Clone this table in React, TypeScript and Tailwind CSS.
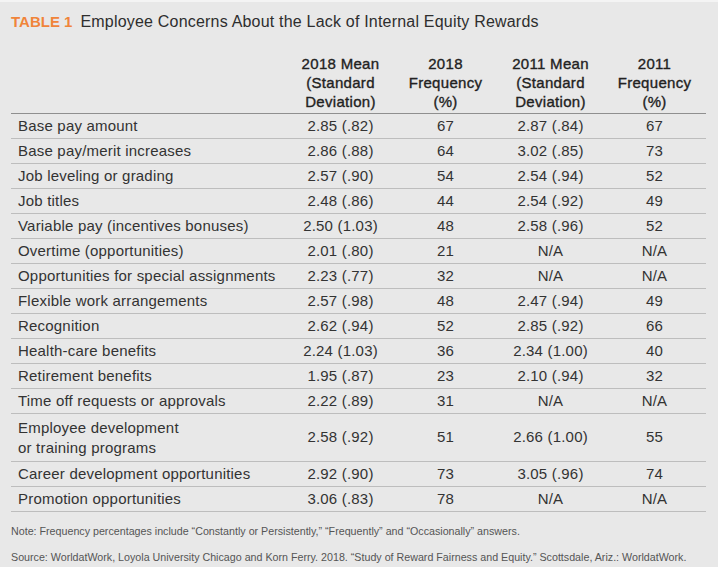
const rows: [string, string, string, string, string][] = [
  ["Base pay amount", "2.85 (.82)", "67", "2.87 (.84)", "67"],
  ["Base pay/merit increases", "2.86 (.88)", "64", "3.02 (.85)", "73"],
  ["Job leveling or grading", "2.57 (.90)", "54", "2.54 (.94)", "52"],
  ["Job titles", "2.48 (.86)", "44", "2.54 (.92)", "49"],
  ["Variable pay (incentives bonuses)", "2.50 (1.03)", "48", "2.58 (.96)", "52"],
  ["Overtime (opportunities)", "2.01 (.80)", "21", "N/A", "N/A"],
  ["Opportunities for special assignments", "2.23 (.77)", "32", "N/A", "N/A"],
  ["Flexible work arrangements", "2.57 (.98)", "48", "2.47 (.94)", "49"],
  ["Recognition", "2.62 (.94)", "52", "2.85 (.92)", "66"],
  ["Health-care benefits", "2.24 (1.03)", "36", "2.34 (1.00)", "40"],
  ["Retirement benefits", "1.95 (.87)", "23", "2.10 (.94)", "32"],
  ["Time off requests or approvals", "2.22 (.89)", "31", "N/A", "N/A"],
  ["Employee development\nor training programs", "2.58 (.92)", "51", "2.66 (1.00)", "55"],
  ["Career development opportunities", "2.92 (.90)", "73", "3.05 (.96)", "74"],
  ["Promotion opportunities", "3.06 (.83)", "78", "N/A", "N/A"],
];

const headers = [
  ["2018 Mean", "(Standard", "Deviation)"],
  ["2018", "Frequency", "(%)"],
  ["2011 Mean", "(Standard", "Deviation)"],
  ["2011", "Frequency", "(%)"],
];

export default function App() {
  return (
    <div
      className="w-[718px] h-[567px] bg-[#e8e8e8] border-t-2 border-[#f4f4f4] text-[#333] overflow-hidden"
      style={{ fontFamily: '"Liberation Sans", Arial, sans-serif' }}
    >
      <div className="pl-[11px] pt-[10px] leading-[20px] text-[#2e2e2e]">
        <span className="font-bold text-[15px] text-[#f0843a]">TABLE 1</span>
        <span className="ml-[8px] text-[16px] tracking-[0.2px]">
          Employee Concerns About the Lack of Internal Equity Rewards
        </span>
      </div>

      <table className="ml-[11px] mt-[22px] w-[695px] border-collapse table-fixed">
        <colgroup>
          <col className="w-[277px]" />
          <col className="w-[105px]" />
          <col className="w-[105px]" />
          <col className="w-[105px]" />
          <col className="w-[103px]" />
        </colgroup>
        <thead>
          <tr className="border-b border-[#8f8f8f]">
            <th />
            {headers.map((h, i) => (
              <th
                key={i}
                className="pb-[2px] text-center align-bottom text-[15px] leading-[19px] tracking-[0.3px] font-normal text-[#222] [-webkit-text-stroke:0.35px_#222]"
              >
                {h.map((l) => (
                  <div key={l}>{l}</div>
                ))}
              </th>
            ))}
          </tr>
        </thead>
        <tbody>
          {rows.map((r) => {
            const tall = r[0].includes("\n");
            return (
              <tr key={r[0]} className="border-b border-[#bdbdbd] text-[15px] tracking-[0.2px]">
                <td className={`pl-[7px] ${tall ? "h-[48px] leading-[20px]" : "h-[25px] leading-[24px]"}`}>
                  {r[0].split("\n").map((l) => (
                    <div key={l}>{l}</div>
                  ))}
                </td>
                {r.slice(1).map((c, i) => (
                  <td key={i} className="text-center">
                    {c}
                  </td>
                ))}
              </tr>
            );
          })}
        </tbody>
      </table>

      <div className="pl-[11px] mt-[12px] text-[10.7px] leading-[14px] text-[#555]">
        Note: Frequency percentages include “Constantly or Persistently,” “Frequently” and “Occasionally” answers.
      </div>
      <div className="pl-[11px] mt-[12px] text-[10.7px] leading-[14px] text-[#555]">
        Source: WorldatWork, Loyola University Chicago and Korn Ferry. 2018. “Study of Reward Fairness and Equity.” Scottsdale, Ariz.: WorldatWork.
      </div>
    </div>
  );
}
